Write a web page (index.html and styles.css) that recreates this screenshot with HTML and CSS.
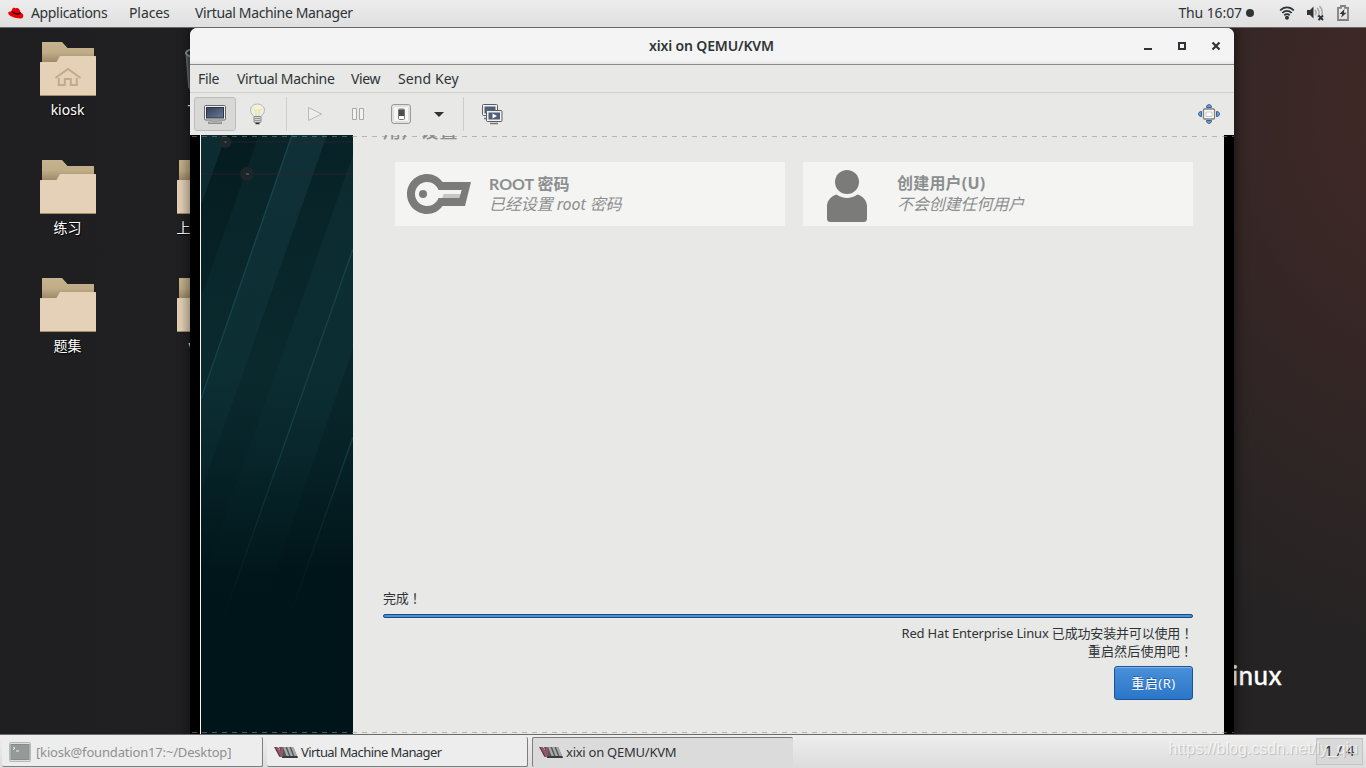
FILE: index.html
```html
<!DOCTYPE html>
<html lang="en">
<head>
  <meta charset="UTF-8">
  <title>xixi on QEMU/KVM</title>
  <link rel="stylesheet" href="styles.css">
</head>
<body>

  <!-- shared shapes -->
  <svg class="defs" width="0" height="0">
    <defs>
      <linearGradient id="backGrad" x1="0" y1="0" x2="0" y2="1">
        <stop offset="0" stop-color="#c6b48f"/>
        <stop offset=".35" stop-color="#c0ac86"/>
        <stop offset=".65" stop-color="#a08c6c"/>
      </linearGradient>
      <linearGradient id="screenGrad" x1="0" y1="0" x2="1" y2="1">
        <stop offset="0" stop-color="#33425c"/>
        <stop offset="1" stop-color="#6c7a92"/>
      </linearGradient>
      <symbol id="folder" viewBox="0 0 56 54">
        <path d="M2 0.500a.5.5 0 0 1 .5-.5H22l5.500 6H53.500a.5.5 0 0 1 .5.500V30H2z" fill="url(#backGrad)"/>
        <path d="M0 20.500a.5.5 0 0 1 .5-.5H16.500L20 14H55.500a.5.5 0 0 1 .5.5V53a1 1 0 0 1-1 1H1a1 1 0 0 1-1-1z" fill="#e4d1b7"/>
        <path d="M0 53H56a1 1 0 0 1-1 1H1a1 1 0 0 1-1-1z" fill="#a48c6a"/>
      </symbol>
      <symbol id="vmm" viewBox="0 0 24 14">
        <path d="M5 2H19L24 13H8z" fill="#55585a"/>
        <path d="M9 2h2.500l3.500 9h-2.500zM13 2h2.500l3.500 9h-2.500zM17 2h2.500l3.500 9h-2.500z" fill="#a6aaab"/>
        <path d="M8 12h15.500" stroke="#303234" stroke-width="1.500"/>
        <path d="M0 2h3.500l3 6 .5-6h2.500L8.500 12H5.500z" fill="#8f5a66"/>
        <path d="M1 2l4.800 9.500" stroke="#3d3f40" stroke-width="1"/>
        <path d="M4 2.500l3 6.500" stroke="#c03a50" stroke-width="1"/>
      </symbol>
    </defs>
  </svg>

  <div class="screen">

    <div class="topbar">
      <svg class="hat" width="16" height="14" viewBox="0 0 16 14">
        <path d="M4.200 3.200C4.700 1.800 6 1.400 7 1.900c1 .5 1.500 0 2.300.1 1.700.3 2.700 2.200 3.200 4.600 1.500.5 2.900 1.500 2.800 3.300-.1 2.300-2.600 2.900-5.300 2.400C6.300 11.800.5 10 .2 7.300 0 5.800 1.600 5.400 3.400 5.700z" fill="#e00"/>
        <path d="M3.400 5.600c.3 1.500 2.900 2.800 5.500 3.100 2 .2 3.600-.3 3.700-1.700l-.3-1.200c-.6 1-2.100 1.500-3.900 1.200C6.200 6.600 4.300 5.500 3.800 4.400z" fill="#200"/>
      </svg>
      <span class="m1">Applications</span>
      <span class="m2">Places</span>
      <span class="m3">Virtual Machine Manager</span>
      <span class="clock">Thu 16:07<i class="dot"></i></span>
      <svg class="wifi" width="16" height="14" viewBox="0 0 16 14">
        <g fill="none" stroke="#2e3436" stroke-width="1.800">
          <path d="M1.200 4.500C5 .4 11 .4 14.800 4.500"/>
          <path d="M3.300 7C6 4.100 10 4.100 12.700 7"/>
          <path d="M5.300 9.300c1.500-1.600 3.900-1.600 5.400 0"/>
        </g>
        <circle cx="8" cy="11.700" r="2" fill="#2e3436"/>
      </svg>
      <svg class="sound" width="17" height="16" viewBox="0 0 17 16">
        <path d="M0 5h3l3.500-3.500v12L3 10H0z" fill="#2e3436"/>
        <g fill="none" stroke="#aaa" stroke-width="1.500">
          <path d="M8 5c1.300 1.500 1.300 3.500 0 5"/>
          <path d="M10.300 3c2.300 3 2.300 6 0 9"/>
          <path d="M12.500 1c2.800 3 3.300 6 2.300 9"/>
        </g>
        <path d="M11.500 10.500l4.500 4.500M16 10.500L11.500 15" stroke="#2e3436" stroke-width="2"/>
      </svg>
      <svg class="battery" width="12" height="16" viewBox="0 0 12 16">
        <path d="M4 1h4v1.800h3V15H1V2.800h3z" fill="none" stroke="#7e8182" stroke-width="1.800"/>
        <path d="M7.500 4L2.500 9h2.800L4 12.800l5.500-5H6.800z" fill="#2e3436"/>
      </svg>
    </div>

    <div class="desktop">
      <div class="icons">
        <div class="icon">
          <svg width="56" height="54"><use href="#folder"/>
            <path d="M15.500 36L28 27l12.500 9M18.800 36v7h6v-6h6v6h6v-7" fill="none" stroke="#c2ab88" stroke-width="2"/>
          </svg>
          <span>kiosk</span>
        </div>
        <div class="icon"><svg width="56" height="54"><use href="#folder"/></svg><span>练习</span></div>
        <div class="icon"><svg width="56" height="54"><use href="#folder"/></svg><span>题集</span></div>
        <div class="icon">
          <svg width="56" height="54">
            <path d="M8.500 11L12 48h32l3.500-37z" fill="#4a5552"/>
            <path d="M9.500 14L12 46" stroke="#66716e" stroke-width="1.500"/>
            <ellipse cx="28" cy="11" rx="19" ry="5.500" fill="#292c2c" stroke="#8f9693" stroke-width="2"/>
          </svg>
          <span class="trash">Trash</span>
        </div>
        <div class="icon"><svg width="56" height="54"><use href="#folder"/></svg><span>上课文件</span></div>
        <div class="icon"><svg width="56" height="54"><use href="#folder"/></svg><span>vm 1</span></div>
      </div>
      <div class="brand">Linux</div>

      <div class="window">
        <div class="titlebar">
          <h1>xixi on QEMU/KVM</h1>
          <svg class="winbtns" width="80" height="12" viewBox="0 0 80 12">
            <path d="M1 9h8" stroke="#2e3436" stroke-width="2"/>
            <path d="M36 3h6v6h-6z" fill="none" stroke="#2e3436" stroke-width="2"/>
            <path d="M69.500 2.500l7 7M76.500 2.500l-7 7" stroke="#2e3436" stroke-width="2.200"/>
          </svg>
        </div>

        <div class="menubar">
          <span class="n1">File</span>
          <span class="n2">Virtual Machine</span>
          <span class="n3">View</span>
          <span class="n4">Send Key</span>
        </div>

        <div class="toolbar">
          <div class="tool active">
            <svg width="24" height="22" viewBox="0 0 24 22">
              <rect x="1.500" y="2.500" width="21" height="14.500" rx="1.200" fill="#eee" stroke="#676767"/>
              <rect x="3.500" y="4.500" width="17" height="10.500" fill="url(#screenGrad)" stroke="#2b3547"/>
              <path d="M9 17.500h6v1.500H9z" fill="#bbb"/>
              <path d="M5.500 19h13v1.500h-13z" fill="#ddd" stroke="#777" stroke-width=".8"/>
            </svg>
          </div>
          <div class="tool bulb">
            <svg width="18" height="22" viewBox="0 0 18 22">
              <path d="M9.500 1C5.500 1 2.500 3.800 2.500 7.300c0 3.200 2.800 4.600 3.200 6.200h7.600c.4-1.600 3.200-3 3.200-6.200C16.500 3.800 13.500 1 9.500 1z" fill="#efefea" stroke="#b4b5b1"/>
              <path d="M6 5.500C7.500 3.800 11.500 3.800 13 5.500L12 8H7z" fill="#fbf8b8"/>
              <path d="M5.500 5.500l2 2.500 2-1.500 2 1.500 2-2.500M8 8.500v4.500M11 8.500v4.500" fill="none" stroke="#e2da86"/>
              <rect x="6" y="13.500" width="7" height="6" rx="1" fill="#d4d4d4" stroke="#888"/>
              <path d="M6.500 15.500h6M6.500 17.500h6" stroke="#999"/>
              <path d="M7.500 20.500h4" stroke="#333" stroke-width="1.500"/>
            </svg>
          </div>
          <i class="sep s1"></i>
          <svg class="play" width="16" height="16" viewBox="0 0 16 16">
            <path d="M1.500 1.500L14.500 8 1.500 14.500z" fill="#ededec" stroke="#b9b9b7"/>
          </svg>
          <svg class="pause" width="14" height="14" viewBox="0 0 14 14">
            <path d="M1.500 1.500h4v11h-4zM8.500 1.500h4v11h-4z" fill="#f2f2f1" stroke="#a9a9a7"/>
          </svg>
          <svg class="power" width="20" height="20" viewBox="0 0 20 20">
            <rect x=".7" y=".7" width="18.600" height="18.600" rx="2" fill="#f7f7f7" stroke="#868784"/>
            <rect x="2.500" y="2.500" width="15" height="15" rx="1" fill="none" stroke="#ddd"/>
            <rect x="7.500" y="5" width="6" height="10.500" rx="1" fill="#fff" stroke="#777"/>
            <path d="M8 5.500h5V12H8z" fill="#4c4f50"/>
          </svg>
          <svg class="caret" width="10" height="5" viewBox="0 0 10 5"><path d="M0 0h10L5 5z" fill="#2e3436"/></svg>
          <i class="sep s2"></i>
          <svg class="snaps" width="22" height="22" viewBox="0 0 22 22">
            <rect x="1.500" y="1.500" width="15" height="11" rx="1" fill="#f0f0f0" stroke="#5c5e60"/>
            <rect x="3.500" y="3.500" width="11" height="7" fill="#4e5f7b"/>
            <path d="M3 15.500h6" stroke="#777" stroke-width="1.500"/>
            <rect x="5.500" y="7.500" width="15.500" height="11" rx="1" fill="#f0f0f0" stroke="#5c5e60"/>
            <rect x="7.500" y="9.500" width="11.500" height="7" fill="#4e5f7b"/>
            <path d="M11.500 10.500l4.500 2.500-4.500 2.500z" fill="#fff"/>
            <path d="M9 20.500h8" stroke="#777" stroke-width="1.500"/>
          </svg>
          <svg class="full" width="22" height="20" viewBox="0 0 22 20">
            <rect x="5.500" y="5" width="11" height="10" rx="1" fill="#fafafa" stroke="#80817a" stroke-width="1.300"/>
            <path d="M8 8h6v4.500H8z" fill="#fff" stroke="#c9c9c4"/>
            <g fill="#7799cf" stroke="#3a5f9c">
              <path d="M8.500 3.500C8.500 1.200 10 .6 11 .6s2.500.6 2.500 2.900z"/>
              <path d="M8.500 16.500c0 2.300 1.500 2.900 2.500 2.900s2.500-.6 2.500-2.900z"/>
              <path d="M3.500 7.500C1.200 7.500.5 9 .5 10s.7 2.500 3 2.500z"/>
              <path d="M18.500 7.500c2.300 0 3 1.500 3 2.500s-.7 2.500-3 2.500z"/>
            </g>
          </svg>
        </div>

        <div class="viewer">
          <svg class="sidebar" width="152" height="599" viewBox="0 0 152 599">
            <defs>
              <linearGradient id="base" x1="0" y1="0" x2="0" y2="1">
                <stop offset="0" stop-color="#041c20"/>
                <stop offset=".4" stop-color="#09272a"/>
                <stop offset=".55" stop-color="#062126"/>
                <stop offset=".73" stop-color="#001519"/>
                <stop offset="1" stop-color="#001519"/>
              </linearGradient>
              <linearGradient id="fade" gradientUnits="userSpaceOnUse" x1="0" y1="0" x2="0" y2="460">
                <stop offset="0" stop-color="#0f3036"/>
                <stop offset=".52" stop-color="#0c2f34"/>
                <stop offset=".75" stop-color="#0a2b30" stop-opacity=".35"/>
                <stop offset="1" stop-color="#08282d" stop-opacity="0"/>
              </linearGradient>
              <linearGradient id="ray" gradientUnits="userSpaceOnUse" x1="0" y1="0" x2="0" y2="490">
                <stop offset="0" stop-color="#17464d"/>
                <stop offset=".6" stop-color="#144047"/>
                <stop offset="1" stop-color="#0a2b30" stop-opacity="0"/>
              </linearGradient>
            </defs>
            <rect width="152" height="599" fill="url(#base)"/>
            <g fill="url(#fade)">
              <path d="M0 0H25L0 70z" opacity=".8"/>
              <path d="M58 0H91L0 264V163z" opacity=".4"/>
              <path d="M91 0H126L0 357V264z"/>
              <path d="M126 0H152V20L-20 505V415z" opacity=".3"/>
              <path d="M152 20V114L-20 610V505z" opacity=".75"/>
              <path d="M152 114V213L0 650V554z" opacity=".85"/>
            </g>
            <g stroke="url(#ray)" fill="none" stroke-width="1.300">
              <path d="M91 0L0 264"/>
              <path d="M152 114L20 490"/>
              <path d="M152 302L92 472"/>
            </g>
            <path d="M0 39h152M24 7h128" stroke="#3a272d" stroke-opacity=".6"/>
            <circle cx="24.500" cy="7" r="6" fill="#1f2729"/>
            <circle cx="46" cy="39" r="7" fill="#1c2629"/>
            <path d="M23.500 7h2M45 39h3" stroke="#435153" stroke-width="2"/>
          </svg>

          <div class="installer">
            <div class="section">用户设置</div>
            <div class="spokes">
              <div class="spoke">
                <svg class="key" width="64" height="52" viewBox="0 0 64 52">
                  <path d="M20 6c6.500 0 12 3 15.500 8H64l-6 24H35.500C32 43 26.500 46 20 46 9 46 0 37 0 26S9 6 20 6zm0 8C13.500 14 8 19.500 8 26s5.500 12 12 12c5.500 0 9.700-3.500 11.500-8H52l2.500-8h-23C29.700 17.500 25.500 14 20 14z" fill="#7b7b79" fill-rule="evenodd"/>
                  <path d="M31.500 22H54.500L53.400 26H31.500z" fill="#f4f4f2"/>
                  <path d="M36.500 26H53.400L52.200 30H35z" fill="#c6c6c4"/>
                  <path d="M31.500 26H36.500L35 30H31.500z" fill="#f4f4f2"/>
                  <circle cx="16" cy="26" r="4" fill="#7b7b79"/>
                </svg>
                <div class="label"><b>ROOT 密码</b><em>已经设置 root 密码</em></div>
              </div>
              <div class="spoke">
                <svg width="64" height="52" viewBox="0 0 64 52">
                  <circle cx="32" cy="12" r="12" fill="#7b7b79"/>
                  <path d="M21.500 24.500c6 4.500 15 4.500 21 0C48 26 52 31 52 36v12.500a3.500 3.500 0 0 1-3.500 3.500h-33a3.500 3.500 0 0 1-3.500-3.500V36c0-5 4-10 9.500-11.500z" fill="#7b7b79"/>
                </svg>
                <div class="label"><b class="wide">创建用户(U)</b><em>不会创建任何用户</em></div>
              </div>
            </div>
            <div class="status">完成<span class="mark">！</span></div>
            <div class="progress"></div>
            <div class="done">Red Hat Enterprise Linux 已成功安装并可以使用<span class="mark">！</span><br><span class="line2">重启然后使用吧<span class="mark">！</span></span></div>
            <button class="reboot">重启(R)</button>
          </div>
        </div>
      </div>
    </div>

    <div class="taskbar">
      <div class="task t1">
        <svg width="22" height="20" viewBox="0 0 22 20">
          <rect x=".5" y=".5" width="21" height="19" rx="1" fill="#dcdddc" stroke="#b5b7b5"/>
          <rect x="2" y="2.500" width="18" height="15" fill="#949a97" stroke="#868b88"/>
          <path d="M4 5l2 1.300L4 7.600M7 9h3" stroke="#eee" fill="none"/>
        </svg>
        <span>[kiosk@foundation17:~/Desktop]</span>
      </div>
      <div class="task t2"><svg width="24" height="14"><use href="#vmm"/></svg><span>Virtual Machine Manager</span></div>
      <div class="task t3"><svg width="24" height="14"><use href="#vmm"/></svg><span>xixi on QEMU/KVM</span></div>
      <div class="workspace">1 / 4</div>
      <div class="watermark">https://blog.csdn.net/ly_qiu</div>
    </div>

  </div>

</body>
</html>
```

FILE: styles.css
```css
* {
  box-sizing: border-box;
}

body {
  margin: 0;
  font-family: "Noto Sans", "Noto Sans CJK SC", sans-serif;
  font-size: 14px;
  letter-spacing: -0.35px;
  color: #2e3436;
}

.defs {
  position: absolute;
}

svg {
  display: block;
  flex: none;
}

span {
  white-space: nowrap;
}

.screen {
  width: 1366px;
  height: 768px;
  overflow: hidden;
  display: flex;
  flex-direction: column;
}

/* top panel */
.topbar {
  height: 28px;
  flex: none;
  display: flex;
  align-items: center;
  padding: 0 17px 2px 8px;
  background: linear-gradient(#ededed, #dfdfdf);
  border-bottom: 1px solid #686868;
}

.hat { margin-right: 7px; }
.m1 { width: 98px; }
.m2 { width: 66px; letter-spacing: -0.1px; }

.clock {
  margin-left: auto;
  margin-right: 25px;
  display: flex;
  align-items: center;
  letter-spacing: -0.1px;
}

.dot {
  width: 8px;
  height: 8px;
  margin-left: 4px;
  border-radius: 50%;
  background: #2e3436;
}

.wifi { margin-right: 12px; }
.sound { margin-right: 13px; }

/* desktop */
.desktop {
  position: relative;
  flex: 1;
  overflow: hidden;
  background:
    radial-gradient(ellipse 420px 560px at 1410px 80px, #422927, rgba(60, 40, 38, 0.7) 45%, rgba(36, 33, 34, 0)),
    linear-gradient(90deg, #1f1f21, #252324);
}

.icons {
  display: grid;
  grid-auto-flow: column;
  grid-template-rows: repeat(3, 118px);
  grid-auto-columns: 137px;
  padding-top: 14px;
  margin-left: -1px;
  width: 274px;
}

.icon {
  display: flex;
  flex-direction: column;
  align-items: center;
  gap: 3px;
  color: #fff;
  letter-spacing: 0;
  text-shadow: 1px 1px 1px #000;
}

.icon span {
  line-height: 22px;
}

.icon .trash {
  letter-spacing: -0.5px;
}

.brand {
  position: absolute;
  left: 1218px;
  top: 629px;
  color: #fff;
  font: 500 26px/36px "Lato", sans-serif;
  letter-spacing: 0.4px;
  -webkit-text-stroke: 0.3px #fff;
}

/* vm window */
.window {
  position: absolute;
  left: 190px;
  top: 0;
  width: 1044px;
  height: 706px;
  display: flex;
  flex-direction: column;
  border-radius: 7px 7px 0 0;
  overflow: hidden;
  background: #e8e8e6;
  box-shadow: 0 0 12px 2px rgba(0, 0, 0, 0.45);
}

.titlebar {
  height: 37px;
  flex: none;
  display: flex;
  align-items: center;
  background: linear-gradient(#f4f4f4 90%, #e4e4e3);
  border-bottom: 1px solid #8b8c88;
}

.titlebar h1 {
  flex: 1;
  margin: 0;
  padding: 0 0 2px 90px;
  text-align: center;
  font-size: 14px;
  font-weight: 600;
  letter-spacing: -0.15px;
}

.winbtns { margin-right: 11px; }

.menubar {
  height: 28px;
  flex: none;
  display: flex;
  align-items: center;
  padding-left: 8px;
  border-bottom: 1px solid #cfcfcd;
}

.n1 { width: 39px; }
.n2 { width: 114px; }
.n3 { width: 47px; }
.n4 { letter-spacing: 0.1px; }

.toolbar {
  height: 42px;
  flex: none;
  display: flex;
  align-items: center;
  padding: 0 14px 0 4px;
}

.tool {
  width: 42px;
  height: 34px;
  display: flex;
  align-items: center;
  justify-content: center;
}

.tool.active {
  background: #d8d8d6;
  border: 1px solid #bcbcba;
  border-radius: 3px;
}

.sep {
  width: 1px;
  height: 34px;
  background: #cdcdcb;
}

.s1 { margin-left: 8px; }
.play { margin-left: 20px; }
.pause { margin-left: 28px; }
.power { margin-left: 26px; }
.caret { margin-left: 23px; }
.s2 { margin-left: 19px; }
.snaps { margin-left: 17px; }
.full { margin-left: auto; }

/* guest display, dashed edges show it is scrolled */
.viewer {
  position: relative;
  height: 599px;
  display: flex;
  padding: 0 10px;
  background: #000;
}

.viewer::before,
.viewer::after {
  content: "";
  position: absolute;
  left: 2px;
  right: 0;
  top: 1px;
  height: 1px;
  background: repeating-linear-gradient(90deg, rgba(140, 140, 140, 0.55) 0 5px, transparent 5px 10px);
}

.viewer::after {
  top: auto;
  bottom: 1px;
}

.sidebar {
  box-sizing: content-box;
  border-left: 1px solid #f4f4f3;
}

.installer {
  flex: 1;
  display: flex;
  flex-direction: column;
  padding: 0 31px 0 30px;
  background: #e8e8e6;
  overflow: hidden;
}

/* scrolled off the top of the guest display */
.section {
  height: 27px;
  flex: none;
  margin-top: -15px;
  margin-bottom: 15px;
  font-size: 18px;
  font-weight: 500;
  line-height: 22px;
  letter-spacing: 0.8px;
  color: #8b8e8f;
}

.spokes {
  display: flex;
  gap: 18px;
  margin-left: 12px;
}

.spoke {
  width: 390px;
  height: 64px;
  display: flex;
  align-items: center;
  padding: 4px 12px 0;
  gap: 18px;
  background: #f4f4f2;
}

.spoke svg {
  margin-bottom: 1px;
}

.spoke .key {
  margin-bottom: 5px;
}

.label {
  display: flex;
  flex-direction: column;
  padding-bottom: 4px;
  color: #8b8e8f;
  font-size: 16px;
  line-height: 21px;
  letter-spacing: 0;
}

.label b {
  font-family: "Lato", "Noto Sans CJK SC", sans-serif;
  margin-top: -1px;
}

.label em {
  letter-spacing: -0.1px;
}

.label .wide {
  font-family: "Noto Sans", "Noto Sans CJK SC", sans-serif;
  margin-top: 0;
  letter-spacing: 0.2px;
}

.status {
  margin-top: 363px;
  font-size: 13px;
  line-height: 18px;
  letter-spacing: -0.2px;
}

/* centred full-width exclamation mark */
.mark {
  font-family: "Noto Sans CJK TC", sans-serif;
}

.progress {
  height: 4px;
  flex: none;
  margin-top: 7px;
  border: 1px solid #184a80;
  border-radius: 2px;
  background: #4a90d9;
}

.done {
  margin-top: 6px;
  text-align: right;
  font-size: 13px;
  line-height: 18px;
  letter-spacing: -0.17px;
}

.line2 {
  letter-spacing: 0.15px;
}

.reboot {
  align-self: flex-end;
  width: 79px;
  height: 34px;
  margin-top: 6px;
  padding: 0 0 2px;
  font: 13px "Noto Sans", "Noto Sans CJK SC", sans-serif;
  letter-spacing: 0.5px;
  color: #fff;
  text-shadow: 0 -1px 0 #1d5fae;
  border: 1px solid #1c5394;
  border-radius: 3px;
  background: linear-gradient(#4a90d9, #2a76c8);
  box-shadow: inset 0 1px 0 #7db1e8;
}

/* bottom panel */
.taskbar {
  position: relative;
  height: 34px;
  flex: none;
  display: flex;
  padding: 2px 3px 0 2px;
  gap: 4px;
  font-size: 13px;
  background: linear-gradient(#eeeeee, #dcdcdc);
  border-top: 1px solid #6b6b6b;
}

.task {
  width: 261px;
  height: 30px;
  display: flex;
  align-items: center;
  gap: 5px;
  padding-left: 7px;
  background: #ededed;
  border-right: 1px solid #7e7e7e;
  border-bottom: 1px solid #7e7e7e;
  border-radius: 2px;
}

.t1 { color: #8d9091; letter-spacing: -0.17px; }
.t2 { letter-spacing: -0.58px; gap: 3px; }

.t3 {
  padding-left: 6px;
  padding-bottom: 1px;
  letter-spacing: -0.25px;
  gap: 3px;
  background: #dbdbdb;
  border: 0;
  border-top: 1px solid #7e7e7e;
  border-left: 1px solid #7e7e7e;
}

.workspace {
  width: 47px;
  height: 27px;
  margin-left: auto;
  margin-top: 1px;
  border: 1px solid #c4c4c4;
  background: #d9d9d9;
  text-align: center;
  font-size: 15px;
  line-height: 23px;
  letter-spacing: -0.1px;
}

.watermark {
  position: absolute;
  right: 8px;
  top: 4px;
  font: 16px/19px "Liberation Sans", sans-serif;
  letter-spacing: -0.02px;
  color: rgba(255, 255, 255, 0.7);
  text-shadow: 1px 1px 1px rgba(0, 0, 0, 0.18);
  letter-spacing: 0;
}
```
